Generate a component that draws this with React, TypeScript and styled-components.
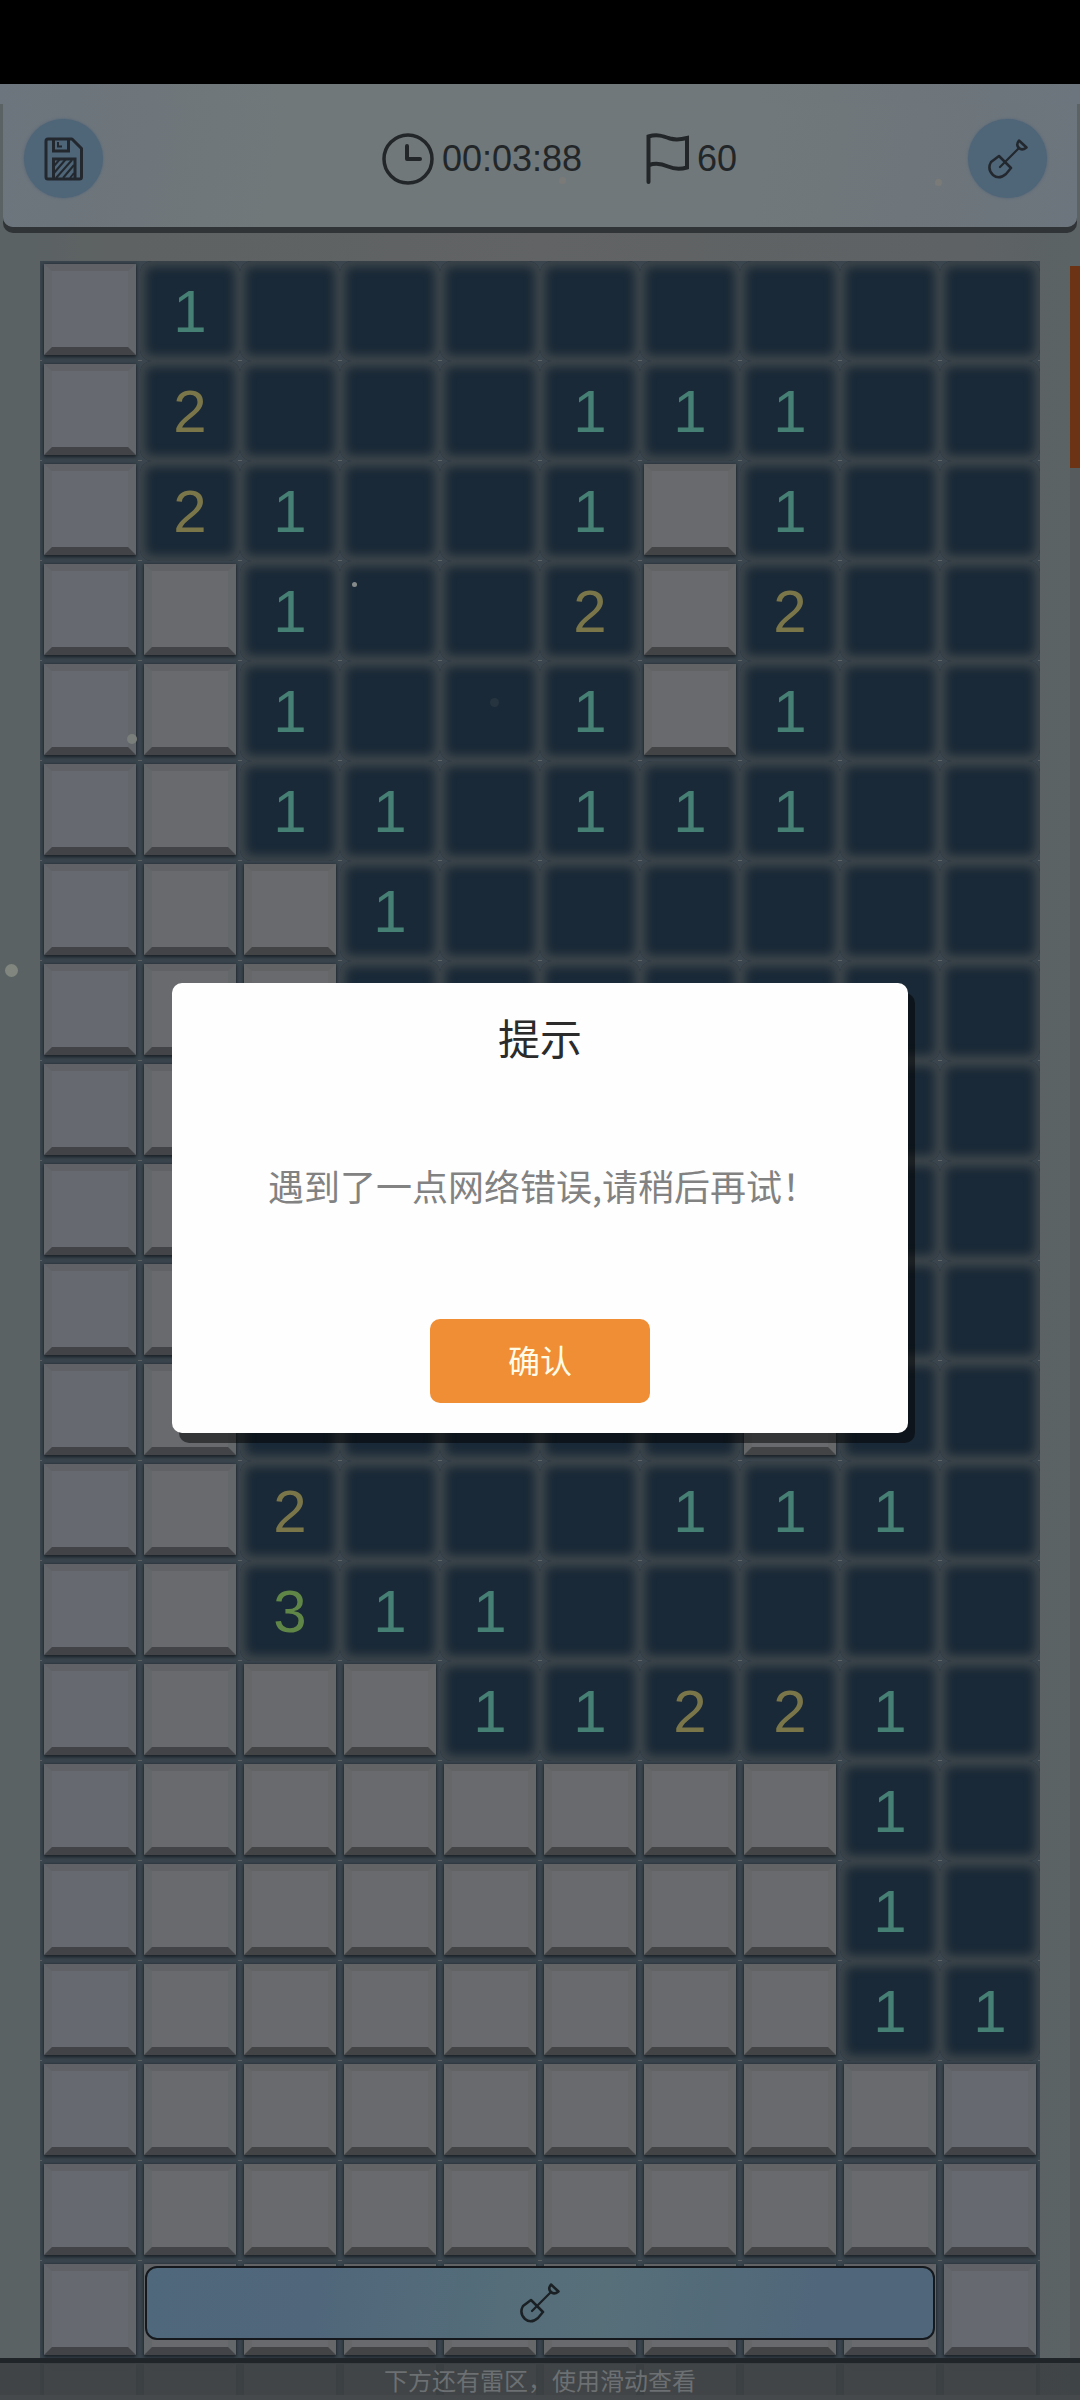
import React, { useState } from 'react';
import styled, { createGlobalStyle } from 'styled-components';

const latin = '"Liberation Sans", "Noto Sans CJK SC", sans-serif';
const cjk = '"Noto Sans CJK SC", sans-serif';

const GlobalStyle = createGlobalStyle`
  * { box-sizing: border-box; }
  body { margin: 0; background: #000; font-family: ${latin}; }
  button { font-family: inherit; padding: 0; margin: 0; border: 0; }
`;

const Screen = styled.div`
  position: relative;
  display: flex;
  flex-direction: column;
  height: 100vh;
  overflow: hidden;
  background: linear-gradient(90deg, #5a6264 0%, #5e6263 10%, #616364 50%, #5e6264 90%, #5b6365 100%);
`;

const StatusBar = styled.div`
  flex: none;
  height: 84px;
  background: #000;
`;

const headerFill =
  'linear-gradient(100deg, #6c747d 0%, #6e767b 14%, #70787a 26%, #70787b 70%, #6e767b 84%, #6c747d 100%)';

const HeaderCap = styled.div`
  flex: none;
  height: 20px;
  background: ${headerFill};
`;

const Header = styled.header`
  flex: none;
  display: flex;
  align-items: center;
  height: 123px;
  margin: 0 3px 6px;
  padding: 0 30px 14px 21px;
  border-radius: 0 0 10px 10px;
  background: ${headerFill};
  box-shadow: 0 6px 0 #303436;
`;

const RoundButton = styled.button`
  flex: none;
  display: grid;
  place-items: center;
  width: 79px;
  height: 79px;
  border-radius: 50%;
  background: #4f6578;
  box-shadow: 0 0 3px #4f6578;
  color: #22282e;
`;

const Stats = styled.div`
  flex: 1;
  display: flex;
  justify-content: center;
  gap: 64px;
  padding-left: 48px;
`;

const Stat = styled.div`
  display: flex;
  align-items: center;
  gap: 8px;
  color: #222628;
  font-size: 36px;
  line-height: 52px;
`;

const Field = styled.main`
  flex: 1;
  min-height: 0;
  display: flex;
  align-items: flex-start;
  overflow: hidden;
  padding: 28px 0 0 40px;
`;

const Board = styled.div`
  flex: 1;
  display: grid;
  grid-template-columns: repeat(10, 1fr);
  margin-right: 30px;
`;

const Track = styled.div`
  flex: none;
  align-self: stretch;
  width: 10px;
  margin-top: 5px;
  background: #565b5e;
`;

const Thumb = styled.div`
  height: 202px;
  background: #6d3315;
`;

const Cell = styled.div`
  position: relative;
  display: flex;
  aspect-ratio: 1;
  background: #3a454d;

  &::after {
    content: '';
    position: absolute;
    inset: auto 0 0 0;
    height: 1px;
    background: linear-gradient(90deg, #5c6164 2px, transparent 2px calc(100% - 2px), #5c6164 calc(100% - 2px));
  }
`;

const Tile = styled.button<{ $edge: number }>`
  flex: 1;
  margin: 3px 4px 6px;
  border-style: solid;
  border-width: 7px 8px 8px;
  border-color: ${p => ['#5f6167 #63676c #414347 #63676c', '#606266 #64676a #424447 #64676a', '#626365 #656769 #434446 #656769'][p.$edge]};
  background: ${p => ['#66696f', '#686a6e', '#696a6e'][p.$edge]};
  box-shadow: 0 2px 3px #1c2328, 0 0 3px #263038;
`;

const inks: Record<string, string> = { '1': '#468074', '2': '#7b7649', '3': '#5f8547' };

const Open = styled.div<{ $value: string }>`
  flex: 1;
  display: grid;
  place-items: center;
  padding-top: 2px;
  border-radius: 12px;
  background: #1a2937;
  box-shadow: inset 0 0 10px 6px #3c454a;
  color: ${p => inks[p.$value] ?? 'transparent'};
  font-size: 60px;
  line-height: 60px;
`;

const Dock = styled.footer`
  position: absolute;
  inset: auto 0 0 0;
`;

const DigButton = styled.button`
  display: grid;
  place-items: center;
  width: calc(100% - 290px);
  height: 74px;
  margin: 0 auto 18px;
  border: 2px solid #15191d;
  border-radius: 12px;
  background: linear-gradient(100deg, #50687c 0%, #50677b 22%, #546d79 45%, #566f79 58%, #526a79 75%, #50667b 85%, #50667b 100%);
  color: #1a2024;
`;

const Hint = styled.p`
  display: flex;
  align-items: center;
  justify-content: center;
  height: 42px;
  margin: 0;
  padding-top: 2px;
  border-top: 5px solid #1f2529;
  border-bottom: 5px solid #46494c;
  background: rgba(61, 65, 68, 0.9);
  background-clip: padding-box;
  color: #6c7072;
  font-family: ${cjk};
  font-size: 24px;
  line-height: 30px;
`;

const Spark = styled.i<{ $x: number; $y: number; $size: number; $ink: string }>`
  position: absolute;
  left: ${p => p.$x}px;
  top: ${p => p.$y}px;
  width: ${p => p.$size}px;
  height: ${p => p.$size}px;
  border-radius: 50%;
  background: ${p => p.$ink};
`;

const Overlay = styled.div`
  position: absolute;
  inset: 0;
  display: grid;
  place-items: center;
  padding-top: 16px;
`;

const Dialog = styled.section`
  display: flex;
  flex-direction: column;
  align-items: center;
  width: min(736px, 90%);
  padding: 24px 24px 30px;
  border-radius: 10px;
  background: #fefefe;
  box-shadow: 7px 10px 0 rgba(0, 0, 0, 0.5);
  font-family: ${cjk};
`;

const Title = styled.h1`
  margin: 0;
  color: #2b2b2b;
  font-size: 42px;
  font-weight: 400;
  line-height: 60px;
`;

const Message = styled.p`
  margin: 90px 0 106px;
  padding-left: 6px;
  color: #828282;
  font-size: 36px;
  line-height: 56px;
`;

const Confirm = styled.button`
  width: 220px;
  height: 84px;
  padding-bottom: 4px;
  border-radius: 10px;
  background: #ef8e34;
  color: #fffbe6;
  font-size: 32px;
  line-height: 48px;
`;

function SaveIcon() {
  return (
    <svg width="40" height="44" viewBox="0 0 40 44" fill="none" stroke="currentColor" strokeWidth="3">
      <path d="M4 2H28L37.500 11.500V40Q37.500 42 35.500 42H4Q2 42 2 40V4Q2 2 4 2Z" strokeLinejoin="round" />
      <path d="M9.500 2V14H24.500V2" />
      <path d="M14 5V9.500H18" strokeWidth="2" />
      <path d="M9.500 42V22H31V42" />
      <path d="M10 29L16 22M10 36L22 22M12 41L28 23M19 41L30 28M26 41L30 36" strokeWidth="2" />
    </svg>
  );
}

function ShovelIcon() {
  return (
    <svg width="40" height="40" viewBox="0 0 40 40" fill="none" stroke="currentColor" strokeWidth="2.500" strokeLinejoin="round" strokeLinecap="round">
      <path d="M11 17L23 29L18 35Q11 41 5 36Q-1 30 3 23Z" />
      <path d="M12 28L31 9" strokeWidth="2.200" />
      <path d="M31 1.500L38.500 8.500Q34 12 31 9Q27.500 6 31 1.500Z" />
    </svg>
  );
}

function ClockIcon() {
  return (
    <svg width="52" height="52" viewBox="0 0 52 52" fill="none" stroke="currentColor" strokeLinecap="round">
      <circle cx="26" cy="26" r="24" strokeWidth="3.500" />
      <path d="M25 13V26H38" strokeWidth="4" strokeLinejoin="round" />
    </svg>
  );
}

function FlagIcon() {
  return (
    <svg width="43" height="52" viewBox="0 0 43 52" fill="none" stroke="currentColor" strokeWidth="4" strokeLinecap="round">
      <path d="M2.500 49V3.500C11 1 17 3 24 5.500Q31 7.500 41 5V34.500Q31 37.500 22 33.500Q12 29 3 32" />
    </svg>
  );
}

const field = [
  '#1........',
  '#2...111..',
  '#21..1#1..',
  '##1..2#2..',
  '##1..1#1..',
  '##11.111..',
  '###1......',
  '###.......',
  '##........',
  '##........',
  '##........',
  '##.....#..',
  '##2...111.',
  '##311.....',
  '####11221.',
  '########1.',
  '########1.',
  '########11',
  '##########',
  '##########',
  '##########',
  '##########',
];

const sparks = [
  { x: 559, y: 177, size: 7, ink: '#7a7b78' },
  { x: 935, y: 179, size: 7, ink: '#7a7b78' },
  { x: 352, y: 582, size: 5, ink: '#858b8a' },
  { x: 127, y: 734, size: 10, ink: '#7b7f7b' },
  { x: 5, y: 964, size: 13, ink: '#81877f' },
  { x: 490, y: 698, size: 9, ink: '#26343f' },
];

export default function App() {
  const [open, setOpen] = useState(true);
  return (
    <>
      <GlobalStyle />
      <Screen>
        <StatusBar />
        <HeaderCap />
        <Header>
          <RoundButton aria-label="保存"><SaveIcon /></RoundButton>
          <Stats>
            <Stat><ClockIcon />00:03:88</Stat>
            <Stat><FlagIcon />60</Stat>
          </Stats>
          <RoundButton aria-label="挖掘"><ShovelIcon /></RoundButton>
        </Header>
        <Field>
          <Board>
            {field.flatMap((row, r) =>
              row.split('').map((value, c) => (
                <Cell key={`${r}-${c}`}>
                  {value === '#' ? (
                    <Tile $edge={Math.min(c, 9 - c, 2)} aria-label={`${r + 1}, ${c + 1}`} />
                  ) : (
                    <Open $value={value}>{value === '.' ? null : value}</Open>
                  )}
                </Cell>
              )),
            )}
          </Board>
          <Track><Thumb /></Track>
        </Field>
        <Dock>
          <DigButton aria-label="挖掘"><ShovelIcon /></DigButton>
          <Hint>下方还有雷区，使用滑动查看</Hint>
        </Dock>
        {sparks.map(s => (
          <Spark key={`${s.x}-${s.y}`} $x={s.x} $y={s.y} $size={s.size} $ink={s.ink} />
        ))}
        {open && (
          <Overlay>
            <Dialog role="dialog" aria-labelledby="dialog-title">
              <Title id="dialog-title">提示</Title>
              <Message>遇到了一点网络错误,请稍后再试！</Message>
              <Confirm onClick={() => setOpen(false)}>确认</Confirm>
            </Dialog>
          </Overlay>
        )}
      </Screen>
    </>
  );
}
